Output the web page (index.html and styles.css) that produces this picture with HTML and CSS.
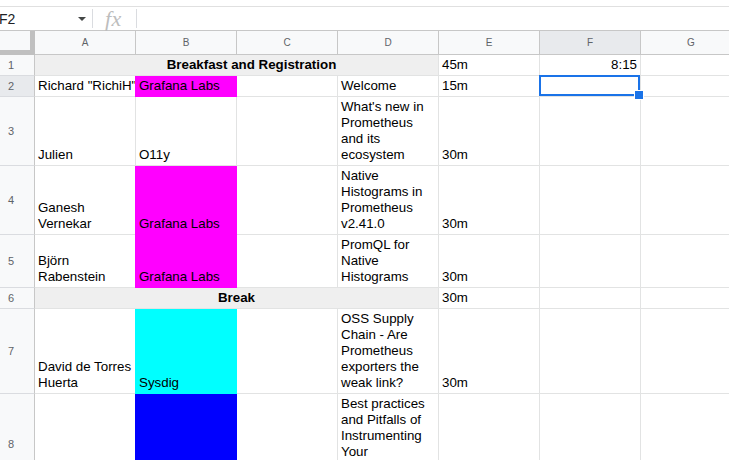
FILE: index.html
```html
<!DOCTYPE html>
<html>
<head>
<meta charset="utf-8">
<link rel="stylesheet" href="styles.css">
</head>
<body>
<div class="top-strip"></div>
<div class="formula-bar">
  <div class="name-box"><span class="cell-ref">F2</span><span class="caret"></span></div>
  <div class="divider"></div>
  <div class="fx">fx</div>
  <div class="divider"></div>
  <div class="formula-input"></div>
</div>
<div class="sheet">
  <div class="corner"></div>
  <div class="col-head">A</div>
  <div class="col-head">B</div>
  <div class="col-head">C</div>
  <div class="col-head">D</div>
  <div class="col-head">E</div>
  <div class="col-head active">F</div>
  <div class="col-head">G</div>

  <div class="row-head">1</div>
  <div class="cell merged title">Breakfast and Registration</div>
  <div class="cell">45m</div>
  <div class="cell right">8:15</div>
  <div class="cell"></div>

  <div class="row-head active">2</div>
  <div class="cell clip">Richard "RichiH"</div>
  <div class="cell magenta">Grafana Labs</div>
  <div class="cell"></div>
  <div class="cell">Welcome</div>
  <div class="cell">15m</div>
  <div class="cell selected"><span class="selection"></span></div>
  <div class="cell"></div>

  <div class="row-head">3</div>
  <div class="cell">Julien</div>
  <div class="cell">O11y</div>
  <div class="cell"></div>
  <div class="cell">What's new in Prometheus and its ecosystem</div>
  <div class="cell">30m</div>
  <div class="cell"></div>
  <div class="cell"></div>

  <div class="row-head">4</div>
  <div class="cell">Ganesh Vernekar</div>
  <div class="cell magenta">Grafana Labs</div>
  <div class="cell"></div>
  <div class="cell">Native Histograms in Prometheus v2.41.0</div>
  <div class="cell">30m</div>
  <div class="cell"></div>
  <div class="cell"></div>

  <div class="row-head">5</div>
  <div class="cell">Björn Rabenstein</div>
  <div class="cell magenta">Grafana Labs</div>
  <div class="cell"></div>
  <div class="cell">PromQL for Native Histograms</div>
  <div class="cell">30m</div>
  <div class="cell"></div>
  <div class="cell"></div>

  <div class="row-head">6</div>
  <div class="cell merged">Break</div>
  <div class="cell">30m</div>
  <div class="cell"></div>
  <div class="cell"></div>

  <div class="row-head">7</div>
  <div class="cell">David de Torres Huerta</div>
  <div class="cell cyan">Sysdig</div>
  <div class="cell"></div>
  <div class="cell">OSS Supply Chain - Are Prometheus exporters the weak link?</div>
  <div class="cell">30m</div>
  <div class="cell"></div>
  <div class="cell"></div>

  <div class="row-head">8</div>
  <div class="cell"></div>
  <div class="cell blue"></div>
  <div class="cell"></div>
  <div class="cell top">Best practices and Pitfalls of Instrumenting Your</div>
  <div class="cell"></div>
  <div class="cell"></div>
  <div class="cell"></div>
</div>
</body>
</html>
```
FILE: styles.css
```css
* {
  box-sizing: border-box;
}

body {
  margin: 0;
  width: 729px;
  height: 460px;
  overflow: hidden;
  background: #ffffff;
  font-family: "Liberation Sans", Arial, sans-serif;
}

.top-strip {
  height: 7px;
  border-bottom: 1px solid #e0e0e0;
}

.formula-bar {
  height: 24px;
  border-bottom: 1px solid #c7c7c7;
  display: flex;
  align-items: center;
}

.name-box {
  width: 92px;
  display: flex;
  align-items: center;
  justify-content: space-between;
  padding-right: 6px;
}

.cell-ref {
  margin-left: -1px;
  font-size: 14px;
  color: #202124;
}

.caret {
  width: 0;
  height: 0;
  border-left: 4px solid transparent;
  border-right: 4px solid transparent;
  border-top: 4px solid #444746;
  margin-top: 1px;
}

.divider {
  width: 1px;
  height: 19px;
  background: #dadce0;
}

.fx {
  width: 43px;
  padding-left: 12px;
  font-family: "Liberation Serif", "Times New Roman", serif;
  font-style: italic;
  font-size: 22px;
  letter-spacing: 0.5px;
  color: #bdbdbd;
  line-height: 20px;
}

.formula-input {
  flex: 1;
}

.sheet {
  display: grid;
  grid-template-columns: 35px repeat(7, 101px);
  grid-template-rows: 24px 21px 21px 69px 69px 53px 21px 85px 101px;
}

.corner {
  background: #f8f9fa;
  border-right: 5px solid #c0c0c0;
  border-bottom: 5px solid #c0c0c0;
}

.col-head {
  background: #f8f9fa;
  border-right: 1px solid #c7c7c7;
  border-bottom: 1px solid #c7c7c7;
  font-size: 10px;
  color: #5f6368;
  display: flex;
  align-items: center;
  justify-content: center;
}

.row-head {
  background: #f8f9fa;
  border-right: 1px solid #c7c7c7;
  border-bottom: 1px solid #dadce0;
  font-size: 11px;
  color: #5f6368;
  display: flex;
  align-items: center;
  justify-content: center;
  padding-right: 12px;
}

.col-head.active,
.row-head.active {
  background: #e8eaed;
}

.cell {
  border-right: 1px solid #e2e3e3;
  border-bottom: 1px solid #e2e3e3;
  padding: 0 2px 2px 3px;
  font-size: 10pt;
  line-height: 16px;
  color: #000000;
  display: flex;
  flex-direction: column;
  justify-content: flex-end;
  overflow: hidden;
  min-width: 0;
}

.cell.top {
  justify-content: flex-start;
  padding-top: 2px;
}

.cell.clip {
  white-space: nowrap;
  padding-left: 3px;
  padding-right: 0;
}

.cell.right {
  text-align: right;
  padding-right: 3px;
}

.cell.merged {
  grid-column: span 4;
  background: #efefef;
  font-weight: bold;
  text-align: center;
  padding-right: 3px;
}

.cell.title {
  padding-left: 33px;
}

.cell.magenta {
  background: #ff00ff;
  border-color: #ff00ff;
  box-shadow: -1px 0 0 #ff00ff;
}

.cell.cyan {
  background: #00ffff;
  border-color: #00ffff;
  box-shadow: -1px 0 0 #00ffff;
}

.cell.blue {
  background: #0000ff;
  border-color: #0000ff;
  box-shadow: -1px 0 0 #0000ff;
}

.cell.selected {
  position: relative;
  overflow: visible;
}

.selection {
  position: absolute;
  left: -1px;
  top: -1px;
  right: 0;
  bottom: 0;
  border: 2px solid #1a73e8;
}

.selection::after {
  content: "";
  position: absolute;
  right: -6px;
  bottom: -6px;
  width: 8px;
  height: 8px;
  background: #1a73e8;
  border: 1px solid #ffffff;
}
```
